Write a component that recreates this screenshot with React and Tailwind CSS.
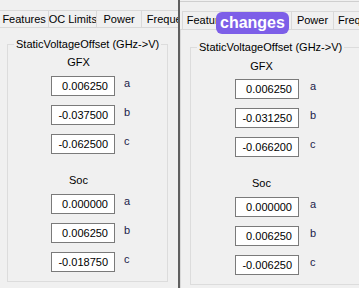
import React from "react";

const font = { fontFamily: '"Liberation Sans", Arial, sans-serif' };

const Tab = ({ label, className }) => (
  <div
    className={`h-full flex items-center justify-center border-t border-l border-r border-[#d9d9d9] -mr-px whitespace-nowrap overflow-hidden ${className}`}
  >
    {label}
  </div>
);

const ValueRow = ({ value, letter, boxMargin, letterGap }) => (
  <div className={`flex items-start ${boxMargin}`}>
    <div className="w-[64px] h-[20px] border border-[#7a7a7a] bg-white text-right pr-[6px] leading-[18px] text-black">
      {value}
    </div>
    <div className={`${letterGap} pt-[1px] leading-[13px] text-[#1c1c4a]`}>{letter}</div>
  </div>
);

const Group = ({ values, boxMargin, labelWidth, letterGap, mt, gaps }) => (
  <fieldset className={`border border-[#dcdcdc] ${mt} pb-[9px]`}>
    <legend className="ml-[6px] px-[2px] leading-[13px] text-black">
      StaticVoltageOffset (GHz-&gt;V)
    </legend>
    <div className={`${boxMargin} ${labelWidth} text-center leading-[13px] ${gaps.title}`}>GFX</div>
    <div className={`flex flex-col gap-[9px] ${gaps.gfx}`}>
      <ValueRow value={values[0]} letter="a" boxMargin={boxMargin} letterGap={letterGap} />
      <ValueRow value={values[1]} letter="b" boxMargin={boxMargin} letterGap={letterGap} />
      <ValueRow value={values[2]} letter="c" boxMargin={boxMargin} letterGap={letterGap} />
    </div>
    <div className={`${boxMargin} ${labelWidth} text-center leading-[13px] ${gaps.soc}`}>Soc</div>
    <div className={`flex flex-col gap-[9px] ${gaps.socBoxes}`}>
      <ValueRow value={values[3]} letter="a" boxMargin={boxMargin} letterGap={letterGap} />
      <ValueRow value={values[4]} letter="b" boxMargin={boxMargin} letterGap={letterGap} />
      <ValueRow value={values[5]} letter="c" boxMargin={boxMargin} letterGap={letterGap} />
    </div>
  </fieldset>
);

export default function App() {
  return (
    <div
      className="w-[359px] h-[288px] flex bg-[#f0f0f0] overflow-hidden text-[11px] text-black"
      style={font}
    >
      {/* left panel */}
      <div className="w-[178px] shrink-0 pt-[10px] flex flex-col">
        <div className="h-[17px] flex">
          <Tab label="Features" className="w-[52px] border-l-0" />
          <Tab label="OC Limits" className="w-[52px]" />
          <Tab label="Power" className="w-[48px]" />
          <Tab label="Frequency" className="w-[40px] justify-start pl-[5px]" />
        </div>
        <div className="flex-1 border-t border-[#d9d9d9] pl-[7px] pr-[10px]">
          <Group
            values={["0.006250", "-0.037500", "-0.062500", "0.000000", "0.006250", "-0.018750"]}
            boxMargin="ml-[43px]"
            labelWidth="w-[55px]"
            letterGap="ml-[9px]"
            mt="mt-[10px]"
            gaps={{ title: "mt-[5px]", gfx: "mt-[7px]", soc: "mt-[20px]", socBoxes: "mt-[7px]" }}
          />
        </div>
      </div>

      {/* divider */}
      <div className="w-[2px] shrink-0 bg-[#5f5f5f]" />

      {/* right panel */}
      <div className="relative flex-1 pt-[1px] flex flex-col">
        <div className="h-px bg-[#cfcfcf]" />
        <div className="h-[18px] flex mt-[9px] pl-[2px]">
          <Tab label="Features" className="w-[53px]" />
          <Tab label="OC Limits" className="w-[58px]" />
          <Tab label="Power" className="w-[43px]" />
          <Tab label="Frequency" className="w-[40px] justify-start pl-[4px]" />
        </div>
        <div className="flex-1 border-t border-[#d9d9d9] border-l pl-[9px] pr-[6px]">
          <Group
            values={["0.006250", "-0.031250", "-0.066200", "0.000000", "0.006250", "-0.006250"]}
            boxMargin="ml-[44px]"
            labelWidth="w-[53px]"
            letterGap="ml-[11px]"
            mt="mt-[11px]"
            gaps={{ title: "mt-[6px]", gfx: "mt-[6px]", soc: "mt-[20px]", socBoxes: "mt-[7px]" }}
          />
        </div>
        {/* overlay badge */}
        <div className="absolute left-[36px] top-[12px] h-[22px] px-[4px] rounded-[6px] bg-[#7d5fe8] text-white font-bold text-[16px] leading-[22px]">
          changes
        </div>
      </div>
    </div>
  );
}
